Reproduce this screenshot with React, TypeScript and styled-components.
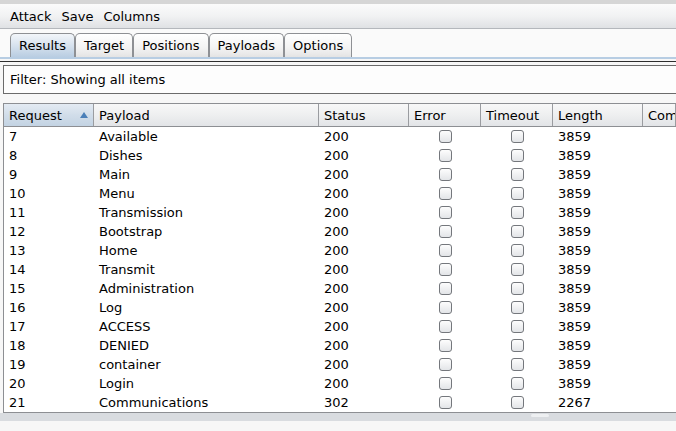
import React from "react";
import styled, { createGlobalStyle } from "styled-components";

const Global = createGlobalStyle`
  html, body { margin: 0; padding: 0; background: #f5f5f5; }
  body { font-family: "DejaVu Sans", sans-serif; font-size: 13px; color: #000; }
`;

const Frame = styled.div`
  width: 676px;
  height: 431px;
  overflow: hidden;
  display: flex;
  flex-direction: column;
  background: #f7f7f7;
`;

const TopStrip = styled.div`
  height: 4px;
  background: #d6d6d6;
  flex: none;
`;

const MenuBar = styled.div`
  height: 25px;
  flex: none;
  display: flex;
  align-items: center;
  padding-left: 10px;
  gap: 10px;
  background: linear-gradient(#fbfbfb, #f1f2f3 50%, #dfe1e4);
  border-bottom: 1px solid #b4b7bc;
  box-sizing: border-box;
`;

const MenuItem = styled.span`
  line-height: 1;
`;

const TabArea = styled.div`
  flex: none;
  padding: 4px 0 0 10px;
  background: #fafafa;
  display: flex;
`;

const Tab = styled.div<{ $active?: boolean }>`
  height: 24px;
  box-sizing: border-box;
  padding: 0 8px;
  display: flex;
  align-items: center;
  border: 1px solid #8e9094;
  border-bottom: none;
  border-radius: 5px 5px 0 0;
  margin-right: 0;
  background: ${(p) =>
    p.$active
      ? "linear-gradient(#f3f6fa, #d7e2ee 50%, #b9cde2)"
      : "linear-gradient(#ffffff, #f3f3f3 60%, #e4e4e4)"};
`;

const TabLine = styled.div`
  flex: none;
  height: 2px;
  background: #b7cde3;
`;

const DarkLine = styled.div`
  flex: none;
  margin-top: 2px;
  height: 1px;
  background: #2e2e2e;
`;

const Filter = styled.div`
  flex: none;
  margin: 3px 0 0 3px;
  height: 29px;
  box-sizing: border-box;
  border: 1px solid #6b6b6b;
  border-right: none;
  background: #fdfdfd;
  display: flex;
  align-items: center;
  padding-left: 6px;
`;

const Table = styled.div`
  flex: none;
  margin: 9px 0 0 3px;
  border: 1px solid #8d8f93;
  border-right: none;
  background: #fff;
`;

const Cols = "90px 225px 90px 72px 72px 90px 1fr";

const HeaderRow = styled.div`
  display: grid;
  grid-template-columns: ${Cols};
  height: 22px;
  border-bottom: 1px solid #8d8f93;
`;

const HeaderCell = styled.div<{ $sorted?: boolean }>`
  display: flex;
  align-items: center;
  padding-left: 5px;
  border-right: 1px solid #9a9ca0;
  background: ${(p) =>
    p.$sorted
      ? "linear-gradient(#e4ebf3, #d1dde9 50%, #c3d3e3)"
      : "linear-gradient(#f8f8f8, #eeeff0 50%, #e2e4e7)"};
  position: relative;
  white-space: nowrap;
  overflow: hidden;
`;

const SortArrow = styled.span`
  position: absolute;
  right: 5px;
  top: 8px;
  width: 0;
  height: 0;
  border-left: 4px solid transparent;
  border-right: 4px solid transparent;
  border-bottom: 6px solid #4a7fb8;
`;

const Row = styled.div`
  display: grid;
  grid-template-columns: ${Cols};
  height: 19px;
  align-items: center;
`;

const Cell = styled.div<{ $center?: boolean }>`
  padding-left: ${(p) => (p.$center ? "0" : "5px")};
  display: flex;
  justify-content: ${(p) => (p.$center ? "center" : "flex-start")};
  white-space: nowrap;
`;

const Check = styled.span`
  width: 13px;
  height: 13px;
  box-sizing: border-box;
  border: 1px solid #74777c;
  border-radius: 3px;
  background: linear-gradient(#fdfdfd, #e3e5e8);
`;

const ScrollBar = styled.div`
  flex: none;
  height: 8px;
  background: #d9dce0;
  position: relative;
`;

const Handle = styled.span`
  position: absolute;
  left: 531px;
  top: 1px;
  width: 18px;
  height: 3px;
  border-radius: 2px;
  background: #eef0f2;
`;

const rows: [number, string, number, number][] = [
  [7, "Available", 200, 3859],
  [8, "Dishes", 200, 3859],
  [9, "Main", 200, 3859],
  [10, "Menu", 200, 3859],
  [11, "Transmission", 200, 3859],
  [12, "Bootstrap", 200, 3859],
  [13, "Home", 200, 3859],
  [14, "Transmit", 200, 3859],
  [15, "Administration", 200, 3859],
  [16, "Log", 200, 3859],
  [17, "ACCESS", 200, 3859],
  [18, "DENIED", 200, 3859],
  [19, "container", 200, 3859],
  [20, "Login", 200, 3859],
  [21, "Communications", 302, 2267],
];

export default function App() {
  return (
    <Frame>
      <Global />
      <TopStrip />
      <MenuBar>
        <MenuItem>Attack</MenuItem>
        <MenuItem>Save</MenuItem>
        <MenuItem>Columns</MenuItem>
      </MenuBar>
      <TabArea>
        <Tab $active>Results</Tab>
        <Tab>Target</Tab>
        <Tab>Positions</Tab>
        <Tab>Payloads</Tab>
        <Tab>Options</Tab>
      </TabArea>
      <TabLine />
      <DarkLine />
      <Filter>Filter: Showing all items</Filter>
      <Table>
        <HeaderRow>
          <HeaderCell $sorted>
            Request
            <SortArrow />
          </HeaderCell>
          <HeaderCell>Payload</HeaderCell>
          <HeaderCell>Status</HeaderCell>
          <HeaderCell>Error</HeaderCell>
          <HeaderCell>Timeout</HeaderCell>
          <HeaderCell>Length</HeaderCell>
          <HeaderCell>Comment</HeaderCell>
        </HeaderRow>
        {rows.map(([id, payload, status, len]) => (
          <Row key={id}>
            <Cell>{id}</Cell>
            <Cell>{payload}</Cell>
            <Cell>{status}</Cell>
            <Cell $center>
              <Check />
            </Cell>
            <Cell $center>
              <Check />
            </Cell>
            <Cell>{len}</Cell>
            <Cell />
          </Row>
        ))}
      </Table>
      <ScrollBar>
        <Handle />
      </ScrollBar>
    </Frame>
  );
}
